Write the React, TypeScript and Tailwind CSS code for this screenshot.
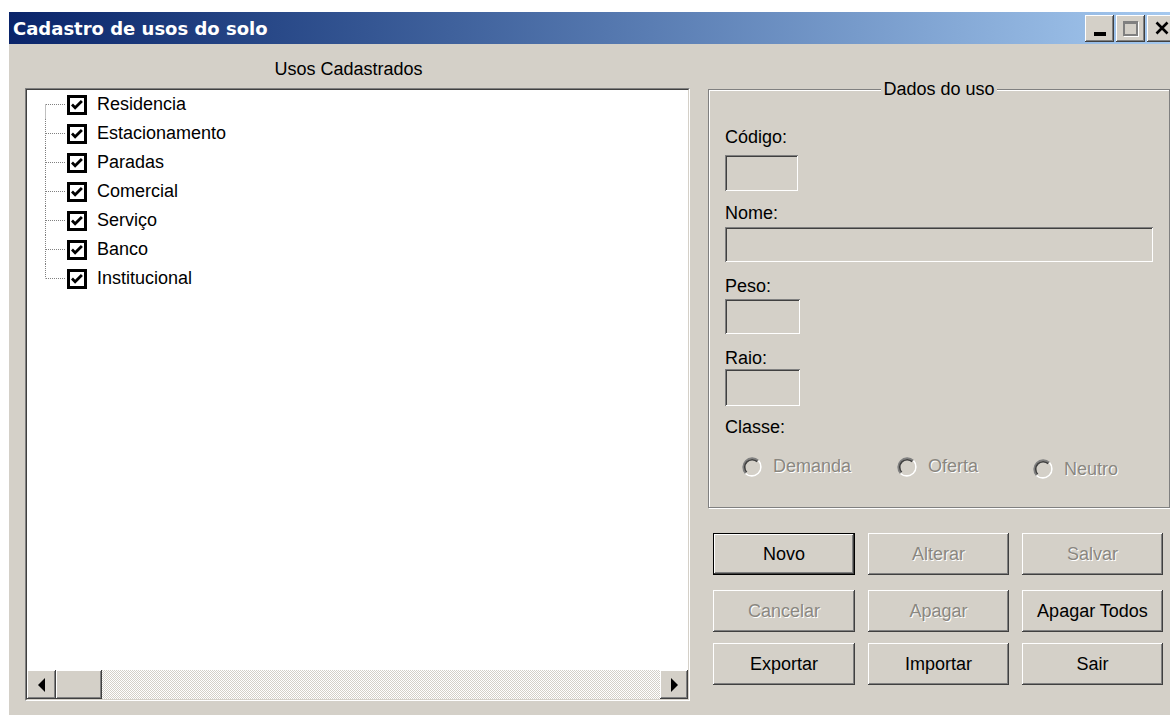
import React from "react";

// classic 3D borders
const raised =
  "shadow-[inset_-1px_-1px_#404040,inset_1px_1px_#ffffff,inset_-2px_-2px_#808080,inset_2px_2px_#d4d0c8]";
const sunken =
  "shadow-[inset_1px_1px_#808080,inset_-1px_-1px_#ffffff,inset_2px_2px_#404040,inset_-2px_-2px_#d4d0c8]";
const disabledText = "text-[#8a8780] [text-shadow:1px_1px_0_#ffffff]";

const usos = [
  "Residencia",
  "Estacionamento",
  "Paradas",
  "Comercial",
  "Serviço",
  "Banco",
  "Institucional",
];

function CheckBox() {
  return (
    <svg width="20" height="20" viewBox="0 0 20 20" className="shrink-0">
      <rect x="1.5" y="1.5" width="17" height="17" fill="#ffffff" stroke="#000000" strokeWidth="3" />
      <path d="M5 9.6l3.1 3.1 6.8-6.8" fill="none" stroke="#000000" strokeWidth="2.8" />
    </svg>
  );
}

function TreeRow({ label, first, last }: { label: string; first: boolean; last: boolean }) {
  return (
    <div className="flex h-[29px] items-center">
      <svg width="40" height="29" className="shrink-0">
        <line
          x1="18.5"
          y1={first ? 14.5 : 0}
          x2="18.5"
          y2={last ? 14.5 : 29}
          stroke="#808080"
          strokeDasharray="1 1"
        />
        <line x1="19" y1="14.5" x2="39" y2="14.5" stroke="#808080" strokeDasharray="1 1" />
      </svg>
      <CheckBox />
      <span className="ml-[10px] leading-[21px]">{label}</span>
    </div>
  );
}

function Arrow({ dir }: { dir: "left" | "right" }) {
  return (
    <svg width="8" height="14" viewBox="0 0 8 14">
      {dir === "left" ? (
        <polygon points="7,0 7,14 0,7" fill="#000000" />
      ) : (
        <polygon points="1,0 1,14 8,7" fill="#000000" />
      )}
    </svg>
  );
}

function Radio({ label, className = "" }: { label: string; className?: string }) {
  return (
    <div className={`flex items-center ${className}`}>
      <svg width="20" height="20" viewBox="0 0 20 20" className="shrink-0">
        <circle cx="10" cy="10" r="8" fill="#d4d0c8" />
        <path d="M3.64 16.36A9 9 0 0 1 16.36 3.64" fill="none" stroke="#808080" strokeWidth="1.8" />
        <path d="M16.36 3.64A9 9 0 0 1 3.64 16.36" fill="none" stroke="#ffffff" strokeWidth="1.8" />
        <path d="M4.7 15.3A7.5 7.5 0 0 1 15.3 4.7" fill="none" stroke="#404040" strokeWidth="1.6" />
        <path d="M15.3 4.7A7.5 7.5 0 0 1 4.7 15.3" fill="none" stroke="#d4d0c8" strokeWidth="1.6" />
      </svg>
      <span className={`ml-[11px] leading-[21px] ${disabledText}`}>{label}</span>
    </div>
  );
}

function Button({
  label,
  width,
  disabled = false,
  isDefault = false,
}: {
  label: string;
  width: string;
  disabled?: boolean;
  isDefault?: boolean;
}) {
  if (isDefault) {
    return (
      <div className={`${width} h-[42px] border border-black`}>
        <div className={`flex h-full w-full items-center justify-center ${raised}`}>{label}</div>
      </div>
    );
  }
  return (
    <div
      className={`${width} flex h-[42px] items-center justify-center ${raised} ${
        disabled ? disabledText : ""
      }`}
    >
      {label}
    </div>
  );
}

export default function App() {
  return (
    <div className="h-[715px] w-[1170px] overflow-hidden bg-white font-['Liberation_Sans',Arial,sans-serif] text-[18px] text-black">
      <div className="ml-[9px] mt-[12px] flex h-[703px] w-[1169px] flex-col bg-[#d4d0c8]">
        {/* title bar */}
        <div className="flex h-[32px] shrink-0 items-center bg-gradient-to-r from-[#0a246a] to-[#a6caf0] pl-[4px] pr-[2px]">
          <span className="font-['DejaVu_Sans',sans-serif] text-[18px] font-bold text-white">
            Cadastro de usos do solo
          </span>
          <div className="ml-auto flex items-center gap-[2px]">
            <div className={`flex h-[27px] w-[29px] items-end justify-center bg-[#d4d0c8] pb-[6px] ${raised}`}>
              <div className="h-[4px] w-[12px] bg-black" />
            </div>
            <div className={`flex h-[27px] w-[29px] items-center justify-center bg-[#d4d0c8] ${raised}`}>
              <div className="h-[15px] w-[15px] border-2 border-t-[3px] border-[#808080] shadow-[1px_1px_0_#ffffff]" />
            </div>
            <div className={`flex h-[27px] w-[29px] items-center justify-center bg-[#d4d0c8] ${raised}`}>
              <svg width="14" height="14" viewBox="0 0 14 14">
                <path d="M1.5 1.5l11 11M12.5 1.5l-11 11" stroke="#000000" strokeWidth="2.6" />
              </svg>
            </div>
          </div>
        </div>

        {/* body */}
        <div className="flex flex-1 pl-[16px]">
          {/* usos list */}
          <div className="flex w-[665px] flex-col">
            <div className="h-[44px] pr-[18px] pt-[15px] text-center leading-[21px]">Usos Cadastrados</div>
            <div className="h-[613px] border border-b-white border-l-[#808080] border-r-white border-t-[#808080]">
              <div className="flex h-full flex-col border border-b-[#d4d0c8] border-l-[#404040] border-r-[#d4d0c8] border-t-[#404040] bg-white">
                <div className="flex-1">
                  {usos.map((u, i) => (
                    <TreeRow key={u} label={u} first={i === 0} last={i === usos.length - 1} />
                  ))}
                </div>
                <div className="flex h-[29px] shrink-0">
                  <div className={`flex w-[29px] items-center justify-center bg-[#d4d0c8] ${raised}`}>
                    <Arrow dir="left" />
                  </div>
                  <div className={`w-[46px] bg-[#d4d0c8] ${raised}`} />
                  <div className="flex-1 bg-[image:repeating-conic-gradient(#ffffff_0_25%,#d4d0c8_0_50%)] bg-[length:2px_2px]" />
                  <div className={`flex w-[28px] items-center justify-center bg-[#d4d0c8] ${raised}`}>
                    <Arrow dir="right" />
                  </div>
                </div>
              </div>
            </div>
          </div>

          {/* dados do uso */}
          <div className="ml-[18px] flex w-[459px] flex-col pt-[35px]">
            <fieldset className="h-[429px] border border-[#808080] px-[16px] pt-[27px] shadow-[inset_1px_1px_#ffffff,1px_1px_#ffffff]">
              <legend className="mx-auto bg-[#d4d0c8] px-[2px] leading-[21px]">Dados do uso</legend>
              <div className="leading-[21px]">Código:</div>
              <div className={`mt-[7px] h-[36px] w-[73px] ${sunken}`} />
              <div className="mt-[12px] leading-[21px]">Nome:</div>
              <div className={`mt-[3px] h-[35px] w-[428px] ${sunken}`} />
              <div className="mt-[14px] leading-[21px]">Peso:</div>
              <div className={`mt-[2px] h-[35px] w-[75px] ${sunken}`} />
              <div className="mt-[14px] leading-[21px]">Raio:</div>
              <div className={`h-[37px] w-[75px] ${sunken}`} />
              <div className="mt-[11px] leading-[21px]">Classe:</div>
              <div className="mt-[18px] flex h-[21px] items-center pl-[17px]">
                <Radio label="Demanda" className="w-[155px]" />
                <Radio label="Oferta" className="w-[136px]" />
                <Radio label="Neutro" className="mt-[5px]" />
              </div>
            </fieldset>

            <div className="ml-[5px] flex flex-col">
              <div className="mt-[25px] flex gap-x-[13px]">
                <Button label="Novo" width="w-[142px]" isDefault />
                <Button label="Alterar" width="w-[141px]" disabled />
                <Button label="Salvar" width="w-[141px]" disabled />
              </div>
              <div className="mt-[15px] flex gap-x-[13px]">
                <Button label="Cancelar" width="w-[142px]" disabled />
                <Button label="Apagar" width="w-[141px]" disabled />
                <Button label="Apagar Todos" width="w-[141px]" />
              </div>
              <div className="mt-[11px] flex gap-x-[13px]">
                <Button label="Exportar" width="w-[142px]" />
                <Button label="Importar" width="w-[141px]" />
                <Button label="Sair" width="w-[141px]" />
              </div>
            </div>
          </div>
        </div>
      </div>
    </div>
  );
}
